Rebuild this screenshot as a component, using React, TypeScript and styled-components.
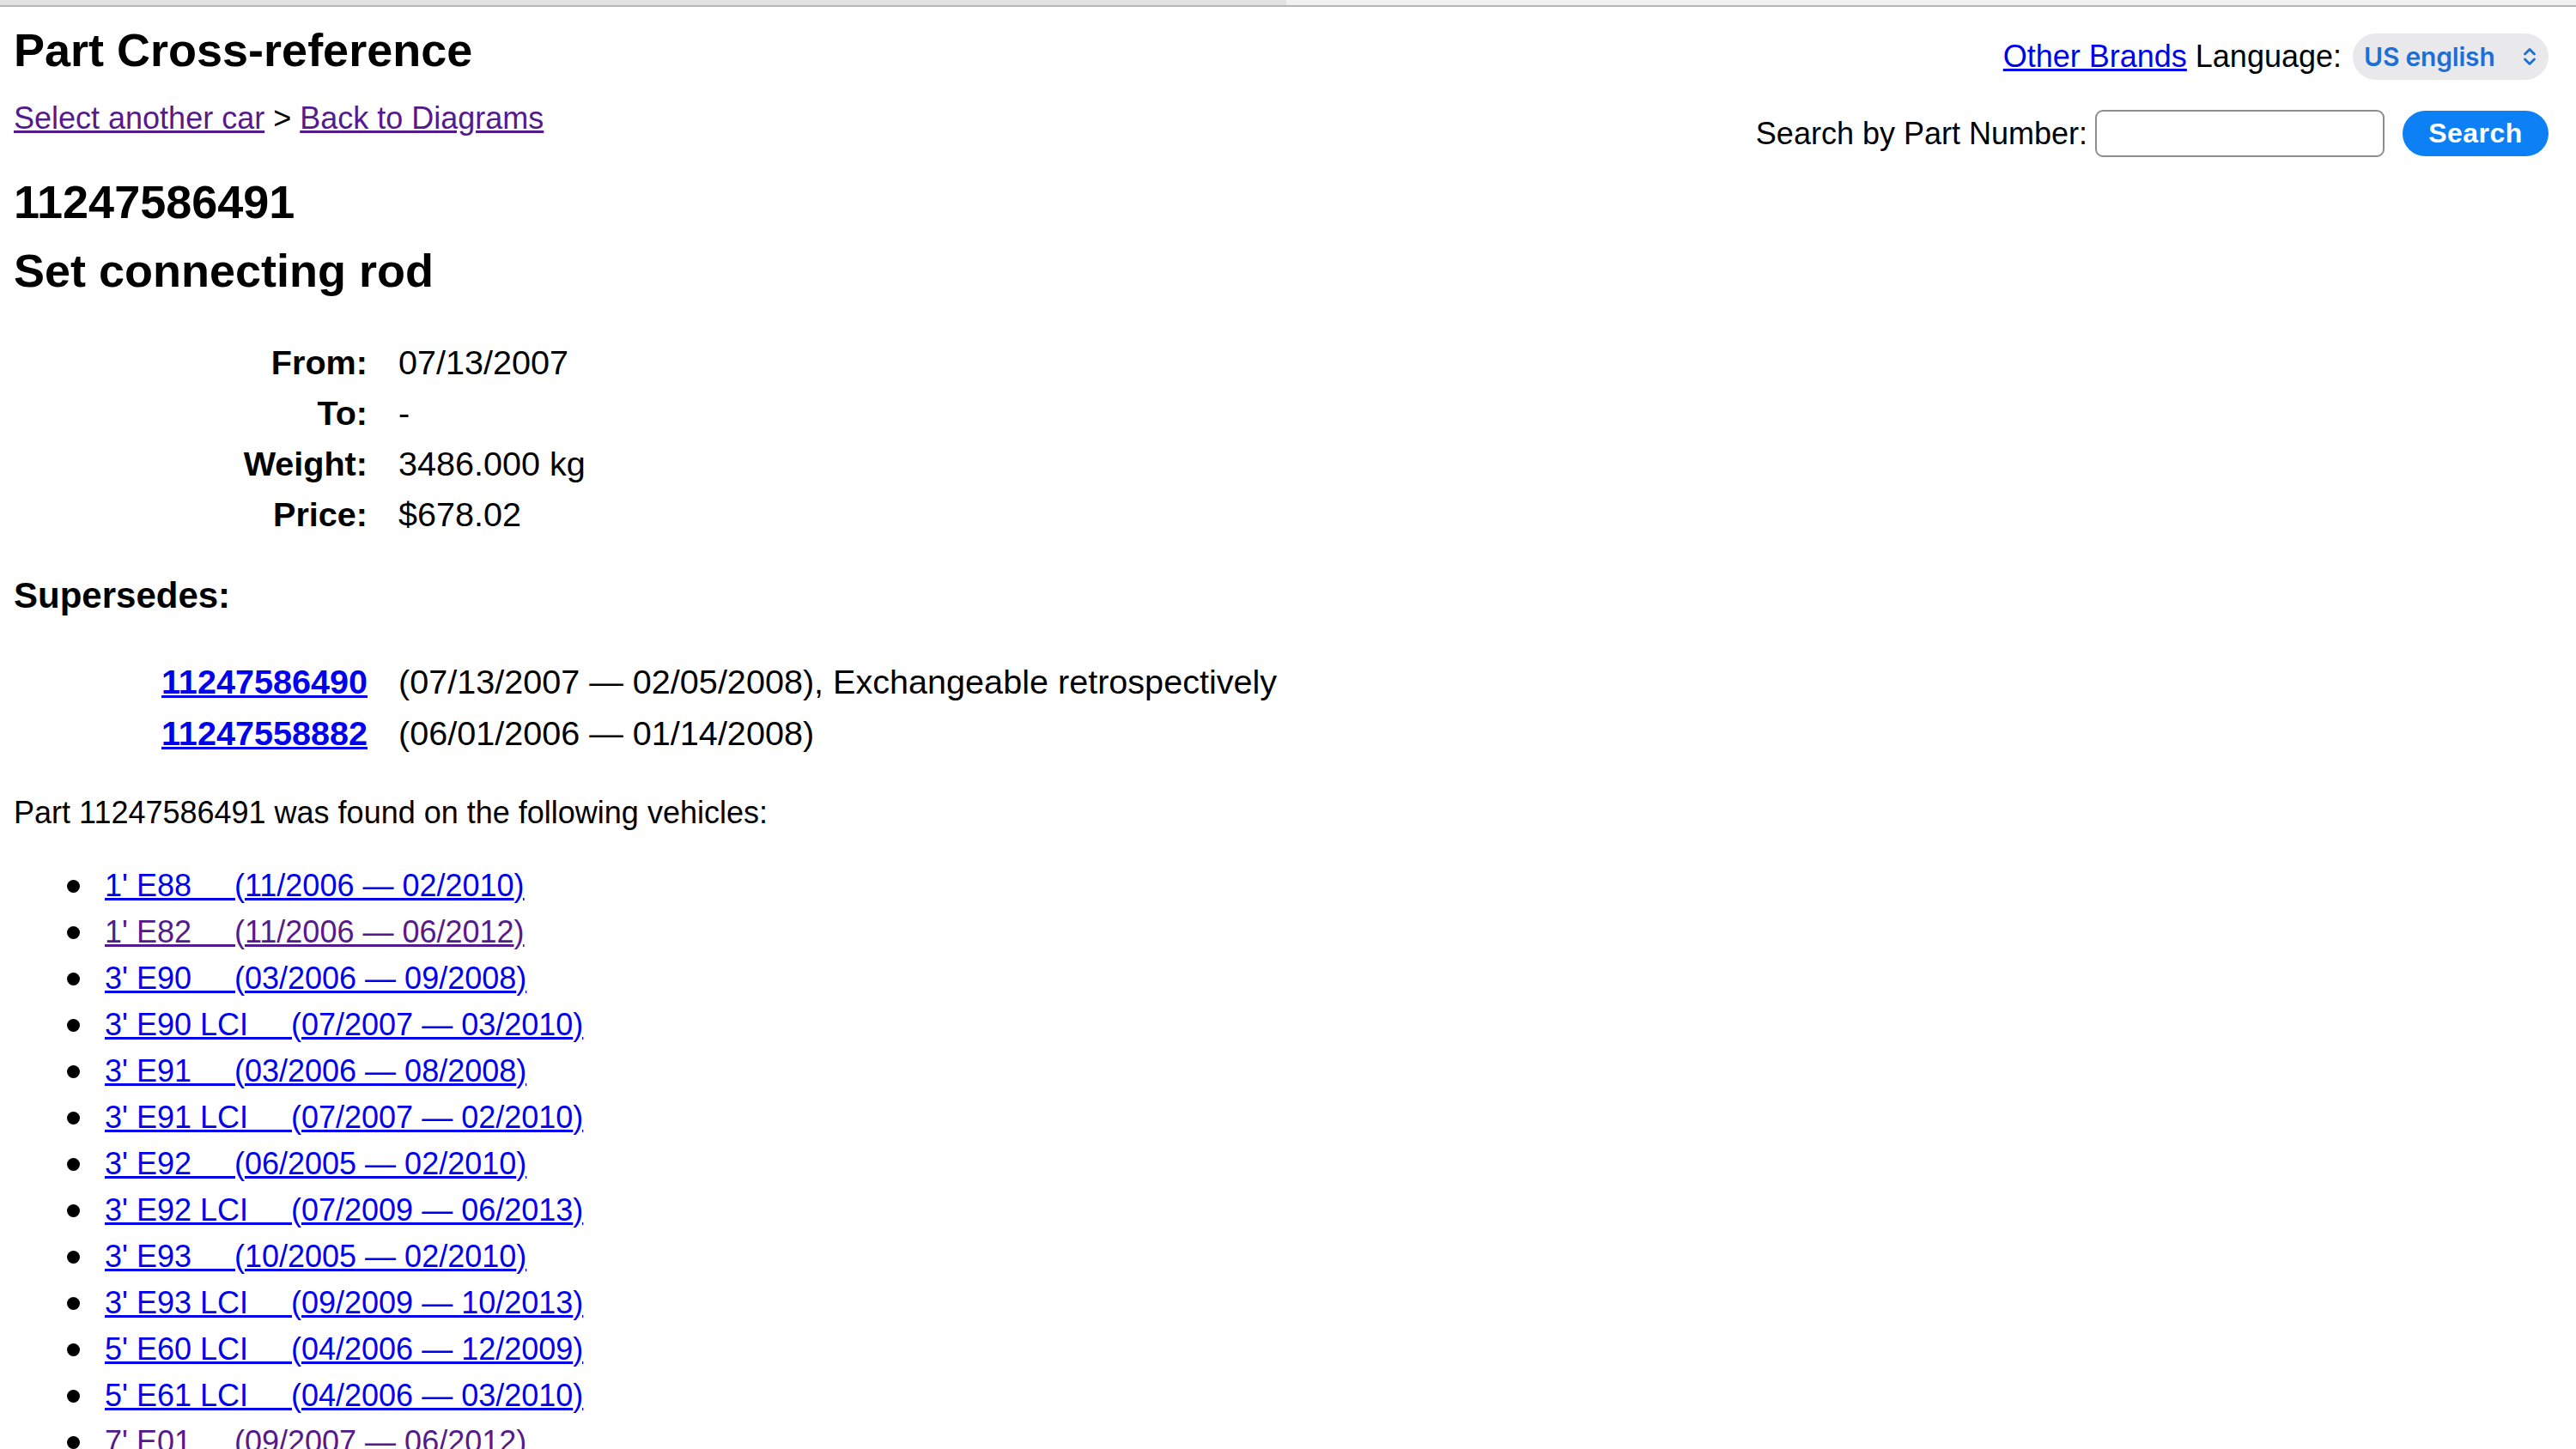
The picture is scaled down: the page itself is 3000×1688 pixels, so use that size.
import React from 'react';
import styled, { createGlobalStyle } from 'styled-components';

const GlobalStyle = createGlobalStyle`
    html, body {
        margin: 0;
        padding: 0;
        background: #fff;
        color: #000;
        font-family: 'Liberation Sans', Arial, Helvetica, sans-serif;
    }
    a {
        color: #0000ee;
    }
    a.visited {
        color: #551a8b;
    }
`;

const TopStrip = styled.div`
    height: 6px;
    background: linear-gradient(to right, #e2e2e2 0, #e2e2e2 1498px, #f1f1f1 1498px);
    border-bottom: 2px solid #b4b4b4;
`;

const Content = styled.div`
    padding: 0 32px 0 16px;
`;

const Header = styled.div`
    display: flex;
    justify-content: space-between;
    align-items: flex-start;
`;

const TitleBlock = styled.div`
    display: flex;
    flex-direction: column;
`;

const Title = styled.h1`
    margin: 23px 0 0;
    font-size: 54px;
    line-height: 54px;
    font-weight: bold;
`;

const Breadcrumb = styled.div`
    margin-top: 32px;
    font-size: 36px;
    line-height: 41px;
`;

const Tools = styled.div`
    display: flex;
    flex-direction: column;
    align-items: flex-end;
    margin-top: 31px;
    font-size: 36px;
`;

const LanguageRow = styled.div`
    display: flex;
    align-items: center;
    height: 54px;
`;

const LanguageLabel = styled.span`
    margin: 0 13px 0 10px;
`;

const LanguageSelect = styled.div`
    box-sizing: border-box;
    width: 228px;
    height: 54px;
    border-radius: 27px;
    background: #e9e9eb;
    padding: 0 12px 0 13px;
    display: flex;
    align-items: center;
    justify-content: space-between;
    color: #1d6fd6;
    font-family: Inter, 'Liberation Sans', sans-serif;
    font-size: 30px;
    font-weight: 600;
    letter-spacing: -0.2px;
`;

const SearchRow = styled.form`
    display: flex;
    align-items: center;
    margin: 35px 0 0;
`;

const SearchInput = styled.input`
    box-sizing: border-box;
    width: 337px;
    height: 55px;
    margin: 0 21px 0 9px;
    border: 2px solid #8d8d8d;
    border-radius: 9px;
    background: #fff;
    font-size: 30px;
    outline: none;
`;

const SearchButton = styled.button`
    width: 170px;
    height: 53px;
    border: none;
    border-radius: 27px;
    background: #0c80f4;
    color: #fff;
    font-family: 'Liberation Sans', Arial, sans-serif;
    font-weight: bold;
    font-size: 32px;
    letter-spacing: 0.5px;
    padding: 0;
    cursor: pointer;
`;

const PartNumber = styled.h2`
    margin: 25px 0 0;
    font-size: 54px;
    line-height: 54px;
`;

const PartName = styled.h2`
    margin: 26px 0 0;
    font-size: 54px;
    line-height: 54px;
`;

const InfoGrid = styled.div<{ $rowHeight: number; $top: number }>`
    display: grid;
    grid-template-columns: 412px auto;
    column-gap: 36px;
    margin-top: ${p => p.$top}px;
    font-size: 39.6px;
    line-height: ${p => p.$rowHeight}px;
`;

const InfoLabel = styled.div`
    text-align: right;
    font-weight: bold;
    white-space: nowrap;
`;

const InfoValue = styled.div`
    white-space: nowrap;
`;

const PartLink = styled.a`
    font-weight: bold;
`;

const SectionTitle = styled.h3`
    margin: 41px 0 0;
    font-size: 42px;
    line-height: 48px;
`;

const FoundText = styled.p`
    margin: 42px 0 0;
    font-size: 36px;
    line-height: 41px;
`;

const VehicleList = styled.ul`
    margin: 38px 0 0;
    padding-left: 106px;
    list-style: none;
    font-size: 36px;
    line-height: 54px;
`;

const VehicleItem = styled.li`
    &::before {
        content: '';
        display: inline-block;
        width: 15px;
        height: 15px;
        border-radius: 50%;
        background: #000;
        margin: 0 29px 0 -44px;
        vertical-align: 4px;
    }
`;

const ChevronIcon = () => (
    <svg width="20" height="26" viewBox="0 0 20 26" fill="none">
        <polyline points="4.5,10 10,4.5 15.5,10" stroke="#1d6fd6" strokeWidth="2.8" strokeLinecap="round" strokeLinejoin="round" />
        <polyline points="4.5,16 10,21.5 15.5,16" stroke="#1d6fd6" strokeWidth="2.8" strokeLinecap="round" strokeLinejoin="round" />
    </svg>
);

const details = [
    { label: 'From:', value: '07/13/2007' },
    { label: 'To:', value: '-' },
    { label: 'Weight:', value: '3486.000 kg' },
    { label: 'Price:', value: '$678.02' },
];

const supersedes = [
    { part: '11247586490', note: '(07/13/2007 \u2014 02/05/2008), Exchangeable retrospectively' },
    { part: '11247558882', note: '(06/01/2006 \u2014 01/14/2008)' },
];

const vehicles = [
    { model: "1' E88", range: '11/2006 \u2014 02/2010' },
    { model: "1' E82", range: '11/2006 \u2014 06/2012', visited: true },
    { model: "3' E90", range: '03/2006 \u2014 09/2008' },
    { model: "3' E90 LCI", range: '07/2007 \u2014 03/2010' },
    { model: "3' E91", range: '03/2006 \u2014 08/2008' },
    { model: "3' E91 LCI", range: '07/2007 \u2014 02/2010' },
    { model: "3' E92", range: '06/2005 \u2014 02/2010' },
    { model: "3' E92 LCI", range: '07/2009 \u2014 06/2013' },
    { model: "3' E93", range: '10/2005 \u2014 02/2010' },
    { model: "3' E93 LCI", range: '09/2009 \u2014 10/2013' },
    { model: "5' E60 LCI", range: '04/2006 \u2014 12/2009' },
    { model: "5' E61 LCI", range: '04/2006 \u2014 03/2010' },
    { model: "7' E01", range: '09/2007 \u2014 06/2012', visited: true },
];

const GAP = '\u00a0\u00a0\u00a0\u00a0\u00a0';

const App = () => (
    <>
        <GlobalStyle />
        <TopStrip />
        <Content>
            <Header>
                <TitleBlock>
                    <Title>Part Cross-reference</Title>
                    <Breadcrumb>
                        <a href="#" className="visited">Select another car</a> &gt;{' '}
                        <a href="#" className="visited">Back to Diagrams</a>
                    </Breadcrumb>
                </TitleBlock>
                <Tools>
                    <LanguageRow>
                        <a href="#">Other Brands</a>
                        <LanguageLabel>Language:</LanguageLabel>
                        <LanguageSelect>
                            <span>US english</span>
                            <ChevronIcon />
                        </LanguageSelect>
                    </LanguageRow>
                    <SearchRow onSubmit={e => e.preventDefault()}>
                        <span>Search by Part Number:</span>
                        <SearchInput type="text" />
                        <SearchButton type="submit">Search</SearchButton>
                    </SearchRow>
                </Tools>
            </Header>

            <PartNumber>11247586491</PartNumber>
            <PartName>Set connecting rod</PartName>

            <InfoGrid $rowHeight={59} $top={51}>
                {details.map(d => (
                    <React.Fragment key={d.label}>
                        <InfoLabel>{d.label}</InfoLabel>
                        <InfoValue>{d.value}</InfoValue>
                    </React.Fragment>
                ))}
            </InfoGrid>

            <SectionTitle>Supersedes:</SectionTitle>
            <InfoGrid $rowHeight={60} $top={46}>
                {supersedes.map(s => (
                    <React.Fragment key={s.part}>
                        <InfoLabel>
                            <PartLink href="#">{s.part}</PartLink>
                        </InfoLabel>
                        <InfoValue>{s.note}</InfoValue>
                    </React.Fragment>
                ))}
            </InfoGrid>

            <FoundText>Part 11247586491 was found on the following vehicles:</FoundText>
            <VehicleList>
                {vehicles.map(v => (
                    <VehicleItem key={v.model}>
                        <a href="#" className={v.visited ? 'visited' : undefined}>
                            {v.model}
                            {GAP}({v.range})
                        </a>
                    </VehicleItem>
                ))}
            </VehicleList>
        </Content>
    </>
);

export default App;
